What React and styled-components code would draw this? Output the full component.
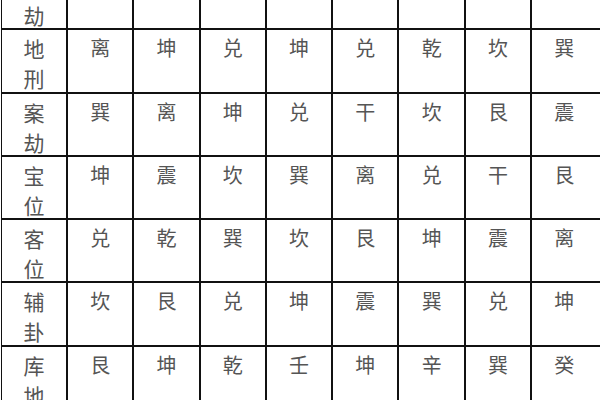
import React from 'react';
import styled, { createGlobalStyle } from 'styled-components';

const GlobalStyle = createGlobalStyle`
  html, body {
    margin: 0;
    padding: 0;
    background: #fff;
    overflow: hidden;
    width: 600px;
    height: 400px;
  }
`;

const Page = styled.div`
  width: 600px;
  height: 400px;
  overflow: hidden;
  background: #fff;
`;

const Grid = styled.div`
  display: grid;
  grid-template-columns: 64px repeat(7, 64.3px) 84px;
  grid-auto-rows: 61.3px;
  gap: 2px;
  margin-top: -33px;
  margin-left: 1px;
  padding-left: 1px;
  width: max-content;
  background: #111;
`;

const Cell = styled.div`
  background: #fff;
  display: flex;
  flex-direction: column;
  align-items: center;
  font-family: "Noto Sans CJK SC", "Noto Sans", sans-serif;
  font-weight: 400;
  font-size: ${(p) => (p.$head ? '21px' : '20px')};
  line-height: 30px;
  color: #555;
  padding-top: ${(p) => (p.$head ? '3px' : '3px')};
  padding-right: ${(p) => (p.$last ? '19.7px' : '0')};
`;

const rows = [
  ['天劫', ['', '', '', '', '', '', '', '']],
  ['地刑', ['离', '坤', '兑', '坤', '兑', '乾', '坎', '巽']],
  ['案劫', ['巽', '离', '坤', '兑', '干', '坎', '艮', '震']],
  ['宝位', ['坤', '震', '坎', '巽', '离', '兑', '干', '艮']],
  ['客位', ['兑', '乾', '巽', '坎', '艮', '坤', '震', '离']],
  ['辅卦', ['坎', '艮', '兑', '坤', '震', '巽', '兑', '坤']],
  ['库地', ['艮', '坤', '乾', '壬', '坤', '辛', '巽', '癸']],
];

export default function App() {
  return (
    <Page>
      <GlobalStyle />
      <Grid>
        {rows.map(([head, cells], r) => (
          <React.Fragment key={r}>
            <Cell $head>
              {head.split('').map((ch, i) => (
                <span key={i}>{ch}</span>
              ))}
            </Cell>
            {cells.map((c, i) => (
              <Cell key={i} $last={i === cells.length - 1}>
                {c}
              </Cell>
            ))}
          </React.Fragment>
        ))}
      </Grid>
    </Page>
  );
}
